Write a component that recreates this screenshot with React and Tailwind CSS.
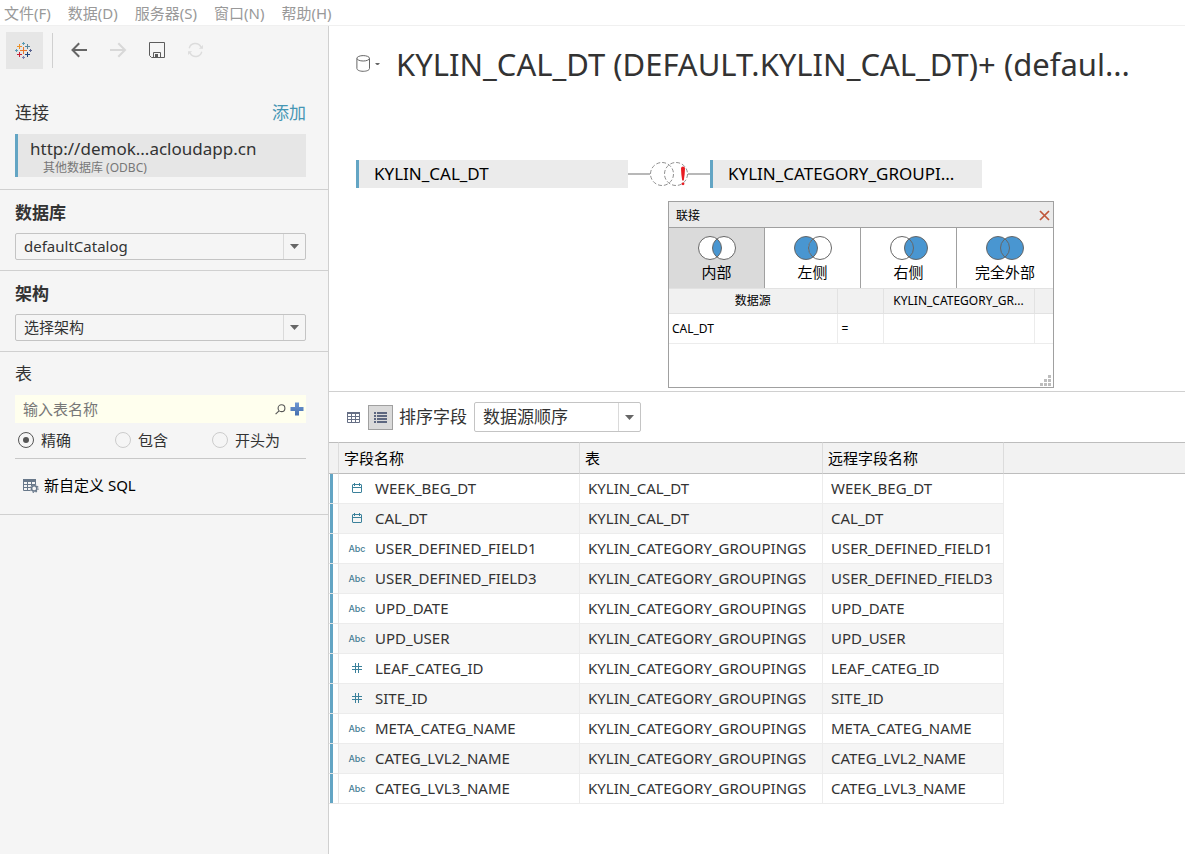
import React, { useState } from "react";

const MENU = ["文件(F)", "数据(D)", "服务器(S)", "窗口(N)", "帮助(H)"];

const GROUPINGS = "KYLIN_CATEGORY_GROUPINGS";

const FIELDS = [
  { type: "date", name: "WEEK_BEG_DT", table: "KYLIN_CAL_DT" },
  { type: "date", name: "CAL_DT", table: "KYLIN_CAL_DT" },
  { type: "text", name: "USER_DEFINED_FIELD1", table: GROUPINGS },
  { type: "text", name: "USER_DEFINED_FIELD3", table: GROUPINGS },
  { type: "text", name: "UPD_DATE", table: GROUPINGS },
  { type: "text", name: "UPD_USER", table: GROUPINGS },
  { type: "number", name: "LEAF_CATEG_ID", table: GROUPINGS },
  { type: "number", name: "SITE_ID", table: GROUPINGS },
  { type: "text", name: "META_CATEG_NAME", table: GROUPINGS },
  { type: "text", name: "CATEG_LVL2_NAME", table: GROUPINGS },
  { type: "text", name: "CATEG_LVL3_NAME", table: GROUPINGS },
];

const JOINS = [
  { id: "inner", label: "内部", left: false, right: false },
  { id: "left", label: "左侧", left: true, right: false },
  { id: "right", label: "右侧", left: false, right: true },
  { id: "full", label: "完全外部", left: true, right: true },
];

function LogoIcon() {
  const marks = [
    [8.5, 8.5, 3.5, "#e8762c"],
    [4.5, 4.5, 2.5, "#eb9129"],
    [12.5, 4.5, 2.5, "#59879b"],
    [4.5, 12.5, 2.5, "#c72035"],
    [12.5, 12.5, 2.5, "#1f457e"],
    [8.5, 1.5, 1.5, "#5b9bb3"],
    [8.5, 15.5, 1.5, "#7b80b0"],
    [1.5, 8.5, 1.5, "#5b9bb3"],
    [15.5, 8.5, 1.5, "#5b6591"],
  ];
  return (
    <svg width="17" height="17" viewBox="0 0 17 17" aria-hidden="true">
      {marks.map(([x, y, r, c]) => (
        <path key={`${x}-${y}`} d={`M${x - r} ${y}h${2 * r}M${x} ${y - r}v${2 * r}`} stroke={c} strokeWidth="1" />
      ))}
    </svg>
  );
}

function BackIcon() {
  return (
    <svg width="17" height="17" viewBox="0 0 17 17" fill="none" stroke="#666" strokeWidth="2" aria-hidden="true">
      <path d="M16 8H1.500M8.200 1.200L1.500 8l6.700 6.800" />
    </svg>
  );
}

function ForwardIcon() {
  return (
    <svg width="17" height="17" viewBox="0 0 17 17" fill="none" stroke="#d8d8d8" strokeWidth="2" aria-hidden="true">
      <path d="M0 8h15M8.300 1.200L15 8l-6.700 6.800" />
    </svg>
  );
}

function SaveIcon() {
  return (
    <svg width="16" height="17" viewBox="0 0 16 17" fill="none" stroke="#5c5c5c" aria-hidden="true">
      <path d="M.5.5h15v15h-13l-2-2z" />
      <path d="M4.500 15.500v-5h7v5" />
      <path d="M6 12h3v3H6z" fill="#5c5c5c" stroke="none" />
    </svg>
  );
}

function RefreshIcon() {
  return (
    <svg width="17" height="16" viewBox="0 0 19 17" fill="none" stroke="#dcdcdc" strokeWidth="1.500" aria-hidden="true">
      <path d="M2.500 6.500a7 7 0 0 1 13-1.500M16.500 10.500a7 7 0 0 1-13 1.500" />
      <path d="M17.800 3v4.200h-4.500zM1.200 14V9.800h4.500z" fill="#dcdcdc" stroke="none" />
    </svg>
  );
}

function CylinderIcon() {
  return (
    <svg width="14" height="18" viewBox="0 0 14 18" fill="none" stroke="#666" aria-hidden="true">
      <ellipse cx="7.200" cy="3.300" rx="6.300" ry="2.700" />
      <path d="M.9 3.500v10c0 1.600 2.800 2.800 6.300 2.800s6.300-1.200 6.300-2.800v-10" />
    </svg>
  );
}

function Caret({ className }) {
  return (
    <svg viewBox="0 0 9 5" className={className} fill="#666" aria-hidden="true">
      <path d="M0 0h9L4.500 5z" />
    </svg>
  );
}

function SearchIcon() {
  return (
    <svg width="11" height="11" viewBox="0 0 11 11" fill="none" stroke="#555" strokeWidth="1.100" aria-hidden="true">
      <circle cx="6.500" cy="4.200" r="3.400" />
      <path d="M4 6.800L.6 10.200" />
    </svg>
  );
}

function PlusIcon() {
  return (
    <svg width="14" height="14" viewBox="0 0 14 14" aria-hidden="true">
      <defs>
        <linearGradient id="plus-fill" x1="0" y1="0" x2="0" y2="1">
          <stop offset="0" stopColor="#6f98d3" />
          <stop offset="1" stopColor="#456fae" />
        </linearGradient>
      </defs>
      <path d="M5 .5h4V5h4.500v4H9v4.500H5V9H.5V5H5z" fill="url(#plus-fill)" />
    </svg>
  );
}

function SqlIcon() {
  return (
    <svg width="16" height="15" viewBox="0 0 16 15" fill="none" aria-hidden="true">
      <path d="M0 1h13v3H0z" fill="#68788a" />
      <path d="M.5 4v8.500H7M.5 6.500h12M.5 9.500h7M4.500 4v8.500M8.500 4v4M12.500 4v2" stroke="#68788a" />
      <circle cx="11.200" cy="10.400" r="2.600" stroke="#68788a" strokeWidth="1.500" />
      <circle cx="11.200" cy="10.400" r="3.900" stroke="#68788a" strokeWidth="1.200" strokeDasharray="1.500 1.563" />
    </svg>
  );
}

function GridIcon() {
  return (
    <svg width="13" height="11" viewBox="0 0 13 11" fill="none" stroke="#666f85" aria-hidden="true">
      <path d="M0 1h13" strokeWidth="2" />
      <path d="M.5 1v9.500h12V1M0 4.500h13M0 7.500h13M4.500 2v9M8.500 2v9" />
    </svg>
  );
}

function ListIcon() {
  return (
    <svg width="13" height="11" viewBox="0 0 13 11" fill="#5d6780" aria-hidden="true">
      <path d="M0 0h2v2H0zM3 0h10v2H3zM0 3h2v2H0zM3 3h10v2H3zM0 6h2v2H0zM3 6h10v2H3zM0 9h2v2H0zM3 9h10v2H3z" />
    </svg>
  );
}

function VennIcon({ left, right }) {
  const blue = "#4996d1";
  return (
    <svg width="38" height="24" viewBox="0 0 38 24" className="shrink-0" aria-hidden="true">
      <circle cx="12" cy="12" r="11.500" fill={left ? blue : "#fff"} />
      <circle cx="26" cy="12" r="11.500" fill={right ? blue : "#fff"} />
      <path d="M19 2.900a11.500 11.500 0 0 1 0 18.200a11.500 11.500 0 0 1 0-18.200z" fill={blue} />
      <circle cx="12" cy="12" r="11.500" fill="none" stroke="#666" />
      <circle cx="26" cy="12" r="11.500" fill="none" stroke="#666" />
    </svg>
  );
}

function JoinErrorIcon() {
  return (
    <svg width="38" height="24" viewBox="0 0 38 24" aria-hidden="true">
      <g fill="none" stroke="#909090" strokeDasharray="4 2">
        <circle cx="12" cy="12" r="11.500" />
        <circle cx="26" cy="12" r="11.500" />
      </g>
      <path d="M31 6.500q0-2 2-2t2 2c0 4-.6 8-1.200 12h-1.600C31.600 14.500 31 10.500 31 6.500z" fill="#e81c23" />
      <circle cx="33" cy="21.800" r="1.400" fill="#e81c23" />
    </svg>
  );
}

function TypeIcon({ type }) {
  if (type === "text") {
    return <span className="font-['Inter',sans-serif] text-[9px] font-medium text-[#457d94]">Abc</span>;
  }
  return (
    <svg width="10" height="11" viewBox="0 0 10 11" fill="none" stroke="#3b819b" aria-hidden="true">
      {type === "date" ? (
        <path d="M1 1.500h8q.5 0 .5.5v7q0 .5-.5.500h-8q-.5 0-.5-.5v-7q0-.5.5-.5M.5 4.500h9M2.500 0v3M7.500 0v3" />
      ) : (
        <path d="M0 3.500h10M0 6.500h10M3.500 0v10M6.500 0v10" />
      )}
    </svg>
  );
}

function SideSelect({ id, value }) {
  return (
    <div className="relative mt-2">
      <select
        id={id}
        defaultValue={value}
        className="block h-[27px] w-full appearance-none rounded-xs border border-[#c4c4c4] bg-[#f5f5f5] px-2 pb-[2px] text-[15px] text-[#333]"
      >
        <option>{value}</option>
      </select>
      <span className="pointer-events-none absolute inset-y-px right-px flex w-[22px] items-center justify-center border-l border-[#dadada]">
        <Caret className="w-[9px]" />
      </span>
    </div>
  );
}

function Sidebar() {
  const [match, setMatch] = useState("精确");
  return (
    <aside className="w-[329px] shrink-0 border-r border-[#d0d0d0] bg-[#f5f5f5] text-[17px] leading-6 text-[#333]">
      <div className="flex h-[49px] items-center pl-[6px]">
        <button aria-label="开始页面" className="grid size-[37px] place-items-center bg-[#e6e6e6] pr-[2px]">
          <LogoIcon />
        </button>
        <span className="mr-[18px] ml-[9px] h-[35px] w-px bg-[#d0d0d0]" />
        <div className="flex items-start gap-[22px]">
          <button aria-label="后退"><BackIcon /></button>
          <button aria-label="前进"><ForwardIcon /></button>
          <button aria-label="保存"><SaveIcon /></button>
          <button aria-label="刷新"><RefreshIcon /></button>
        </div>
      </div>

      <section className="border-b border-[#d0d0d0] px-[15px] pt-[26px] pb-3">
        <div className="flex items-center justify-between pr-[7px]">
          <h2>连接</h2>
          <button className="text-[#4596b4]">添加</button>
        </div>
        <div className="mt-[9px] mr-[7px] h-[43px] border-l-3 border-[#63a5c4] bg-[#e6e6e6] pt-[5px] pl-3">
          <p className="leading-5">http://demok...acloudapp.cn</p>
          <p className="pl-[13px] text-xs leading-[17px] text-[#777]">其他数据库 (ODBC)</p>
        </div>
      </section>

      <section className="border-b border-[#d0d0d0] pt-[11px] pr-[22px] pb-[10px] pl-[15px]">
        <label htmlFor="database" className="block font-bold">数据库</label>
        <SideSelect id="database" value="defaultCatalog" />
      </section>

      <section className="border-b border-[#d0d0d0] pt-[11px] pr-[22px] pb-[10px] pl-[15px]">
        <label htmlFor="schema" className="block font-bold">架构</label>
        <SideSelect id="schema" value="选择架构" />
      </section>

      <section className="border-b border-[#d0d0d0] pt-[10px] pr-[22px] pb-[17px] pl-[15px]">
        <label htmlFor="table-name" className="block">表</label>
        <div className="mt-[9px] flex h-7 items-center bg-[#ffffee] pr-[2px] pl-2">
          <input
            id="table-name"
            type="text"
            placeholder="输入表名称"
            className="min-w-0 flex-1 bg-transparent text-[15px] outline-none placeholder:text-[#777]"
          />
          <button aria-label="搜索" className="mr-1"><SearchIcon /></button>
          <button aria-label="新增"><PlusIcon /></button>
        </div>
        <div className="flex h-9 items-center gap-11 border-b border-[#c8c8c8] pb-px pl-[3px] text-[15px]">
          {["精确", "包含", "开头为"].map((option) => (
            <label key={option} className="flex items-center gap-[7px]">
              <input
                type="radio"
                name="match"
                checked={match === option}
                onChange={() => setMatch(option)}
                className="grid size-4 appearance-none place-content-center rounded-full border border-[#ccc] checked:border-[#555] checked:before:size-[6px] checked:before:rounded-full checked:before:bg-[#555]"
              />
              {option}
            </label>
          ))}
        </div>
        <button className="mt-[14px] ml-2 flex items-center gap-[5px] text-[15px] text-black">
          <SqlIcon />
          新自定义 SQL
        </button>
      </section>
    </aside>
  );
}

function JoinDialog() {
  const [join, setJoin] = useState("inner");
  return (
    <div
      role="dialog"
      aria-label="联接"
      className="absolute top-[175px] left-[339px] flex h-[187px] w-[386px] flex-col border border-[#a0a0a0] bg-white text-black"
    >
      <div className="flex h-[26px] items-center justify-between border-b border-[#a0a0a0] bg-[#ebebeb] pt-[2px] pr-[3px] pl-[7px] text-xs">
        <h2>联接</h2>
        <button aria-label="关闭">
          <svg width="11" height="11" viewBox="0 0 11 11" stroke="#c0563a" strokeWidth="1.700" aria-hidden="true">
            <path d="M1 1l9 9M10 1l-9 9" />
          </svg>
        </button>
      </div>
      <div className="grid h-[60px] grid-cols-4 divide-x divide-[#a0a0a0] text-[15px] leading-6">
        {JOINS.map((j) => (
          <button
            key={j.id}
            aria-pressed={join === j.id}
            onClick={() => setJoin(j.id)}
            className="flex flex-col items-center pt-2 aria-pressed:bg-[#dadada]"
          >
            <VennIcon left={j.left} right={j.right} />
            {j.label}
          </button>
        ))}
      </div>
      <table className="w-full table-fixed border-collapse text-xs">
        <colgroup>
          <col />
          <col className="w-[46px]" />
          <col className="w-[151px]" />
          <col className="w-[19px]" />
        </colgroup>
        <thead>
          <tr className="h-[25px] bg-[#f1f1f1]">
            <th className="border-y border-r border-[#e2e2e2] font-normal">数据源</th>
            <th className="border border-[#e2e2e2]" />
            <th className="border border-[#e2e2e2] font-normal">KYLIN_CATEGORY_GR...</th>
            <th className="border-y border-l border-[#e2e2e2]" />
          </tr>
        </thead>
        <tbody>
          <tr className="h-[30px]">
            <td className="border-r border-b border-[#ececec] pl-[3px]">CAL_DT</td>
            <td className="border border-[#ececec] pl-1">=</td>
            <td className="border border-[#ececec]" />
            <td className="border-b border-[#ececec]" />
          </tr>
        </tbody>
      </table>
      <svg width="11" height="11" viewBox="0 0 11 11" fill="#bdbdbd" className="mt-auto mr-[2px] mb-px self-end" aria-hidden="true">
        <path d="M8 0h3v3H8zM4 4h3v3H4zM8 4h3v3H8zM0 8h3v3H0zM4 8h3v3H4zM8 8h3v3H8z" />
      </svg>
    </div>
  );
}

function TableNode({ children }) {
  return (
    <div className="flex h-7 w-[272px] items-center border-l-3 border-[#63a5c4] bg-[#ebebeb] pl-[15px] text-[17px] text-black">
      {children}
    </div>
  );
}

function Canvas() {
  return (
    <section className="relative h-[366px] border-b border-[#d0d0d0] px-[27px]">
      <div className="flex h-[76px] items-center">
        <button aria-label="数据源" className="mr-4 flex items-center gap-[5px]">
          <CylinderIcon />
          <Caret className="w-[5px]" />
        </button>
        <h1 className="text-[31px] leading-10 whitespace-nowrap text-[#333]">
          KYLIN_CAL_DT (DEFAULT.KYLIN_CAL_DT)+ (defaul...
        </h1>
      </div>
      <div className="mt-[58px] flex items-center">
        <TableNode>KYLIN_CAL_DT</TableNode>
        <span className="h-[2px] w-[22px] bg-[#b8b8b8]" />
        <button aria-label="联接"><JoinErrorIcon /></button>
        <span className="h-[2px] w-[22px] bg-[#b8b8b8]" />
        <TableNode>KYLIN_CATEGORY_GROUPI...</TableNode>
      </div>
      <JoinDialog />
    </section>
  );
}

function FieldGrid() {
  return (
    <table className="w-full table-fixed border-separate border-spacing-0 text-left text-[15px] text-[#333]">
      <colgroup>
        <col className="w-[10px]" />
        <col className="w-[241px]" />
        <col className="w-[243px]" />
        <col className="w-[181px]" />
        <col />
      </colgroup>
      <thead>
        <tr className="h-8 bg-[#f2f2f2] text-black">
          <th className="border-y border-r border-y-[#bdbdbd] border-r-[#dcdcdc]" />
          <th className="border-y border-r border-y-[#bdbdbd] border-r-[#dcdcdc] pl-[5px] font-normal">字段名称</th>
          <th className="border-y border-r border-y-[#bdbdbd] border-r-[#dcdcdc] pl-[5px] font-normal">表</th>
          <th className="border-y border-r border-y-[#bdbdbd] border-r-[#dcdcdc] pl-[5px] font-normal">远程字段名称</th>
          <th className="border-y border-[#bdbdbd]" />
        </tr>
      </thead>
      <tbody>
        {FIELDS.map((f) => (
          <tr key={f.name} className="h-[30px] even:bg-[#f5f5f5]">
            <td className="border-r border-b border-[#e6e6e6] bg-white pl-px">
              <div className="h-[29px] w-[3px] bg-[#63a5c4]" />
            </td>
            <td className="border-r border-b border-[#ececec]">
              <div className="flex items-center">
                <span className="flex w-9 justify-center"><TypeIcon type={f.type} /></span>
                {f.name}
              </div>
            </td>
            <td className="border-r border-b border-[#ececec] pl-2">{f.table}</td>
            <td className="border-r border-b border-[#ececec] pl-2">{f.name}</td>
            <td className="bg-white" />
          </tr>
        ))}
      </tbody>
    </table>
  );
}

export default function App() {
  return (
    <div className="flex min-h-screen flex-col bg-white font-['Noto_Sans','Noto_Sans_CJK_SC',sans-serif]">
      <nav className="flex h-[26px] items-center gap-[17px] border-b border-[#f0f0f0] pt-[2px] pl-1 text-[15px] text-[#999]">
        {MENU.map((item) => (
          <button key={item}>{item}</button>
        ))}
      </nav>
      <div className="flex flex-1">
        <Sidebar />
        <main className="min-w-0 flex-1">
          <Canvas />
          <div className="flex h-[50px] items-center pl-[18px] text-[17px] text-[#333]">
            <button aria-label="预览数据源"><GridIcon /></button>
            <button aria-label="管理元数据" className="mr-[6px] ml-2 grid size-[25px] place-items-center border border-[#a0a0a0] bg-[#dadada]">
              <ListIcon />
            </button>
            <label htmlFor="sort">排序字段</label>
            <div className="relative ml-[7px]">
              <select
                id="sort"
                defaultValue="数据源顺序"
                className="block h-[30px] w-[167px] appearance-none rounded-xs border border-[#c4c4c4] bg-white px-2 text-[17px]"
              >
                <option>数据源顺序</option>
              </select>
              <span className="pointer-events-none absolute inset-y-px right-px flex w-[22px] items-center justify-center border-l border-[#dadada]">
                <Caret className="w-[9px]" />
              </span>
            </div>
          </div>
          <FieldGrid />
        </main>
      </div>
    </div>
  );
}
